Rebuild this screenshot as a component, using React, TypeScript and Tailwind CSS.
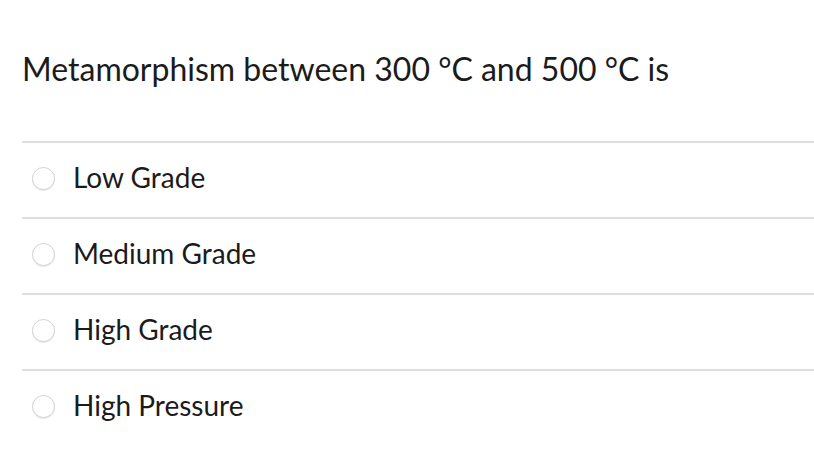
import React from 'react';

const options = ['Low Grade', 'Medium Grade', 'High Grade', 'High Pressure'];

export default function App() {
  return (
    <div className="w-[814px] h-[466px] bg-white pl-[22px] font-['Lato','Liberation_Sans',sans-serif] text-[#1b1b1b]">
      <h1 className="pt-[50px] h-[141px] text-[32px] leading-[38px] font-normal">
        Metamorphism between 300 °C and 500 °C is
      </h1>
      <div>
        {options.map((opt) => (
          <div key={opt} className="border-t-2 border-[#dddddd] h-[76px] flex items-center">
            <span className="ml-[10px] mb-[3px] w-[23px] h-[23px] rounded-full border border-[#d2d2d2] bg-white shadow-[0_1px_1px_rgba(0,0,0,0.08)]" />
            <span className="ml-[18px] mb-[6px] text-[28px] leading-[32px]">{opt}</span>
          </div>
        ))}
      </div>
    </div>
  );
}
